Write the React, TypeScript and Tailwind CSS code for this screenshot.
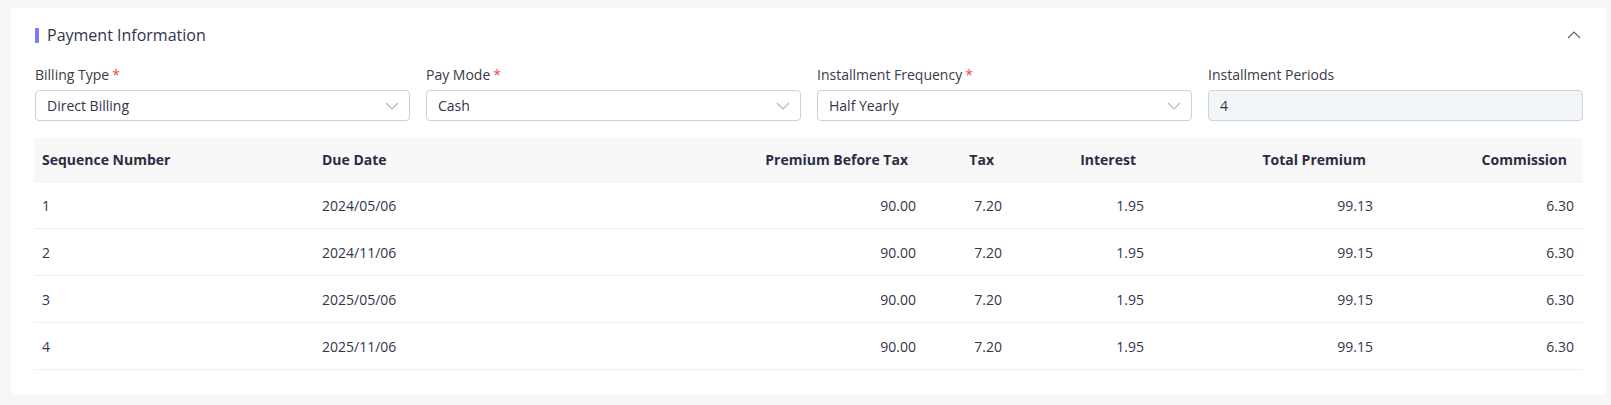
import React from 'react';

const rows = [
  { seq: 1, due: '2024/05/06', before: '90.00', tax: '7.20', interest: '1.95', total: '99.13', commission: '6.30' },
  { seq: 2, due: '2024/11/06', before: '90.00', tax: '7.20', interest: '1.95', total: '99.15', commission: '6.30' },
  { seq: 3, due: '2025/05/06', before: '90.00', tax: '7.20', interest: '1.95', total: '99.15', commission: '6.30' },
  { seq: 4, due: '2025/11/06', before: '90.00', tax: '7.20', interest: '1.95', total: '99.15', commission: '6.30' },
];

const cols = 'grid grid-cols-[280px_310px_300px_86px_142px_229px_1fr]';

const ChevronDown = () => (
  <svg width="14" height="8" viewBox="0 0 14 8" fill="none">
    <path d="M1 1l6 6 6-6" stroke="#b4b7c2" strokeWidth="1.1" />
  </svg>
);

const Field: React.FC<{ label: string; value: string; required?: boolean; disabled?: boolean }> = ({
  label,
  value,
  required,
  disabled,
}) => (
  <div className="flex flex-col">
    <div className="h-[22px] leading-[22px] text-[14px] text-[#3a3a48]">
      {label}
      {required && <span className="text-[#f04848] ml-[3px]">*</span>}
    </div>
    <div
      className={`mt-[4px] h-[31px] rounded-[4px] border flex items-center justify-between pl-[11px] pr-[10px] text-[14px] text-[#33334a] ${
        disabled ? 'bg-[#f3f6f9] border-[#cfd3dd]' : 'bg-white border-[#cdd0dc]'
      }`}
    >
      <span>{value}</span>
      {!disabled && <ChevronDown />}
    </div>
  </div>
);

export default function App() {
  return (
    <div className="min-h-[405px] bg-[#f7f7f7] pt-[8px] pb-[12px] pl-[11px] pr-[5px] font-['Open_Sans','Noto_Sans',sans-serif]">
      <div className="bg-white rounded-[4px] px-[23px] pt-[16px] pb-[24px]">
        {/* Header */}
        <div className="flex items-center justify-between h-[22px]">
          <div className="flex items-center">
            <span className="w-[4px] h-[15px] bg-[#7a7af2] rounded-[1px] ml-[1px]" />
            <span className="ml-[8px] text-[16px] text-[#33334a]">Payment Information</span>
          </div>
          <svg width="14" height="8" viewBox="0 0 14 8" fill="none" className="mr-[2px]">
            <path d="M1 7l6-6 6 6" stroke="#6b5a55" strokeWidth="1.1" />
          </svg>
        </div>

        {/* Fields */}
        <div className="grid grid-cols-4 gap-x-[16px] mt-[18px] pl-[1px]">
          <Field label="Billing Type" value="Direct Billing" required />
          <Field label="Pay Mode" value="Cash" required />
          <Field label="Installment Frequency" value="Half Yearly" required />
          <Field label="Installment Periods" value="4" disabled />
        </div>

        {/* Table */}
        <div className="mt-[17px] text-[14px]">
          <div className={`${cols} h-[44px] items-center bg-[#f8f8f8] border-b border-[#ededed] font-bold text-[#2c2c44]`}>
            <div className="pl-[8px]">Sequence Number</div>
            <div className="pl-[8px]">Due Date</div>
            <div className="text-right pr-[16px]">Premium Before Tax</div>
            <div className="text-right pr-[16px]">Tax</div>
            <div className="text-right pr-[16px]">Interest</div>
            <div className="text-right pr-[15px]">Total Premium</div>
            <div className="text-right pr-[16px]">Commission</div>
          </div>
          {rows.map((r) => (
            <div key={r.seq} className={`${cols} h-[47px] items-center border-b border-[#eeeeee] text-[#35354a]`}>
              <div className="pl-[8px]">{r.seq}</div>
              <div className="pl-[8px]">{r.due}</div>
              <div className="text-right pr-[8px]">{r.before}</div>
              <div className="text-right pr-[8px]">{r.tax}</div>
              <div className="text-right pr-[8px]">{r.interest}</div>
              <div className="text-right pr-[8px]">{r.total}</div>
              <div className="text-right pr-[9px]">{r.commission}</div>
            </div>
          ))}
        </div>
      </div>
    </div>
  );
}
